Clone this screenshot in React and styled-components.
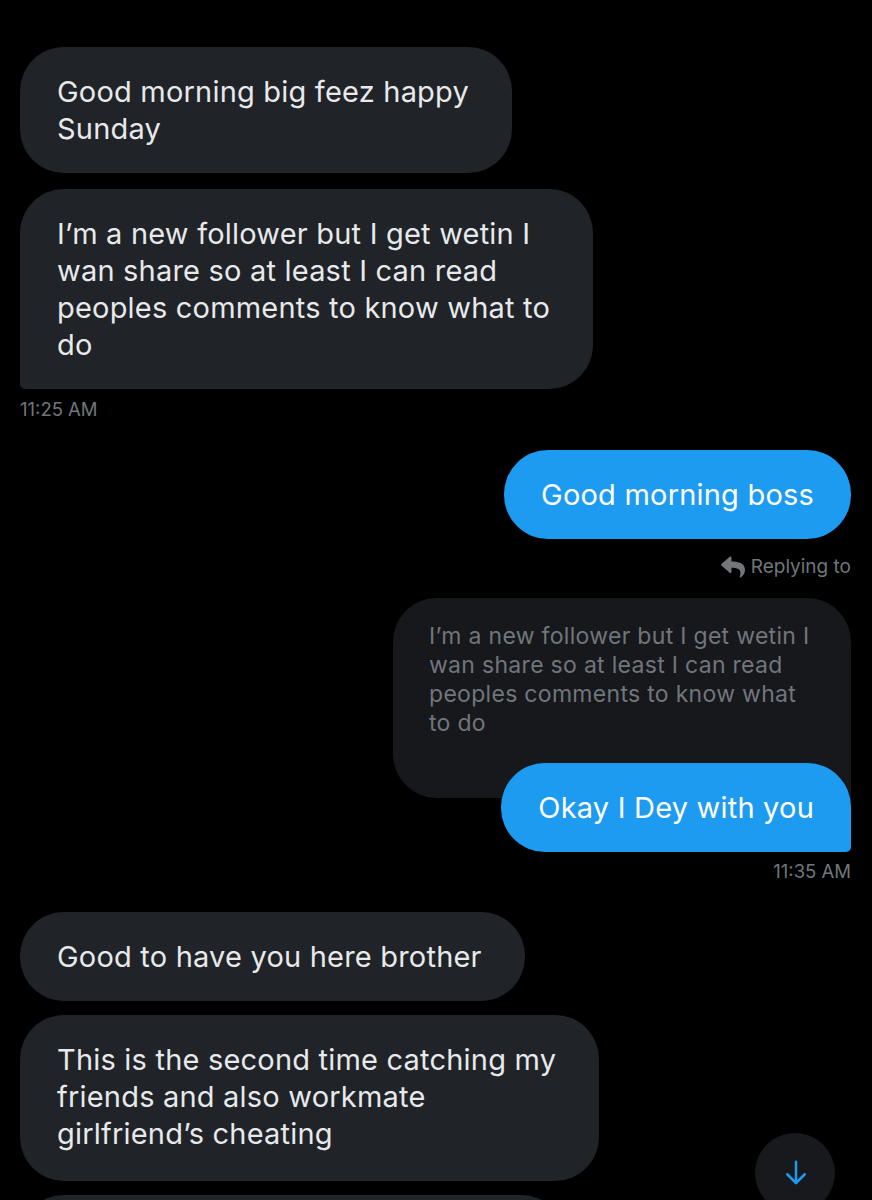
import React from 'react'
import styled, { createGlobalStyle } from 'styled-components'
import { FaReply } from 'react-icons/fa'

const GlobalStyle = createGlobalStyle`
  html, body {
    margin: 0;
    padding: 0;
    background: #000;
  }
  body {
    font-family: Inter, "Noto Sans", sans-serif;
    -webkit-font-smoothing: antialiased;
  }
`

const Thread = styled.div`
  position: relative;
  height: 1200px;
  overflow: hidden;
  display: flex;
  flex-direction: column;
  padding: 47px 21px 0 20px;
  box-sizing: border-box;
`

const Group = styled.div`
  display: flex;
  flex-direction: column;
  align-items: ${props => props.$mine ? 'flex-end' : 'flex-start'};
  gap: ${props => props.$gap || 16}px;
  margin-bottom: ${props => props.$after || 0}px;
`

const Bubble = styled.div`
  width: fit-content;
  min-width: ${props => props.$stub ? '545px' : '0'};
  min-height: ${props => props.$stub ? '90px' : '0'};
  white-space: nowrap;
  box-sizing: border-box;
  padding: ${props => props.$mine ? '26px 37px' : '26px 43px 26px 37px'};
  padding-bottom: ${props => props.$padBottom || 26}px;
  font-size: 29px;
  line-height: 37px;
  letter-spacing: 0.2px;
  color: ${props => props.$mine ? '#fff' : '#e7e9ea'};
  background: ${props => props.$mine ? '#1d9bf0' : '#202327'};
  border-radius: 44px;
  ${props => props.$tail && (props.$mine
    ? 'border-bottom-right-radius: 5px;'
    : 'border-bottom-left-radius: 5px;')}
`

const Stamp = styled.div`
  font-size: 18.5px;
  line-height: 24px;
  color: #71767b;
  margin-top: ${props => props.$pull || -8}px;
`

const ReplyLabel = styled.div`
  display: flex;
  align-items: center;
  gap: 6px;
  font-size: 19px;
  line-height: 24px;
  color: #71767b;
  margin-top: -3px;
  svg {
    width: 24px;
    height: 24px;
  }
`

const QuoteStack = styled.div`
  display: flex;
  flex-direction: column;
  align-items: flex-end;
`

const Quote = styled.div`
  width: 458px;
  box-sizing: border-box;
  padding: 24px 36px 60px;
  font-size: 23px;
  line-height: 29px;
  letter-spacing: 0.3px;
  color: #71767b;
  background: #16181c;
  border-radius: 44px;
  border-bottom-right-radius: 0;
`

const Overlap = styled.div`
  margin-top: -35px;
`

const ScrollDown = styled.button`
  position: absolute;
  left: 755px;
  top: 1133px;
  width: 80px;
  height: 80px;
  border-radius: 50%;
  border: none;
  background: #17191d;
  display: flex;
  align-items: center;
  justify-content: center;
  padding: 0 0 0 1px;
`

const Lines = ({ children }) => children.map((l, i) => (
  <React.Fragment key={i}>{i > 0 && <br />}{l}</React.Fragment>
))

export default function App() {
  return (
    <>
      <GlobalStyle />
      <Thread>
        <Group $after={29}>
          <Bubble><Lines>{['Good morning big feez happy', 'Sunday']}</Lines></Bubble>
          <Bubble $tail>
            <Lines>{[
              'I\u2019m a new follower but I get wetin I',
              'wan share so at least I can read',
              'peoples comments to know what to',
              'do',
            ]}</Lines>
          </Bubble>
          <Stamp>11:25 AM</Stamp>
        </Group>

        <Group $mine $gap={19} $after={29}>
          <Bubble $mine>Good morning boss</Bubble>
          <ReplyLabel><FaReply />Replying to</ReplyLabel>
          <QuoteStack>
            <Quote>
              <Lines>{[
                'I\u2019m a new follower but I get wetin I',
                'wan share so at least I can read',
                'peoples comments to know what',
                'to do',
              ]}</Lines>
            </Quote>
            <Overlap>
              <Bubble $mine $tail>Okay I Dey with you</Bubble>
            </Overlap>
          </QuoteStack>
          <Stamp $pull={-12}>11:35 AM</Stamp>
        </Group>

        <Group $gap={14}>
          <Bubble>Good to have you here brother</Bubble>
          <Bubble $padBottom={29}>
            <Lines>{[
              'This is the second time catching my',
              'friends and also workmate',
              'girlfriend\u2019s cheating',
            ]}</Lines>
          </Bubble>
          <Bubble $stub />
        </Group>

        <ScrollDown aria-label="Scroll to bottom">
          <svg width="30" height="30" viewBox="0 0 24 24" fill="none" stroke="#1d9bf0" strokeWidth="2" strokeLinecap="round" strokeLinejoin="round">
            <path d="M12 3v17" />
            <path d="M5 13l7 7 7-7" />
          </svg>
        </ScrollDown>
      </Thread>
    </>
  )
}
